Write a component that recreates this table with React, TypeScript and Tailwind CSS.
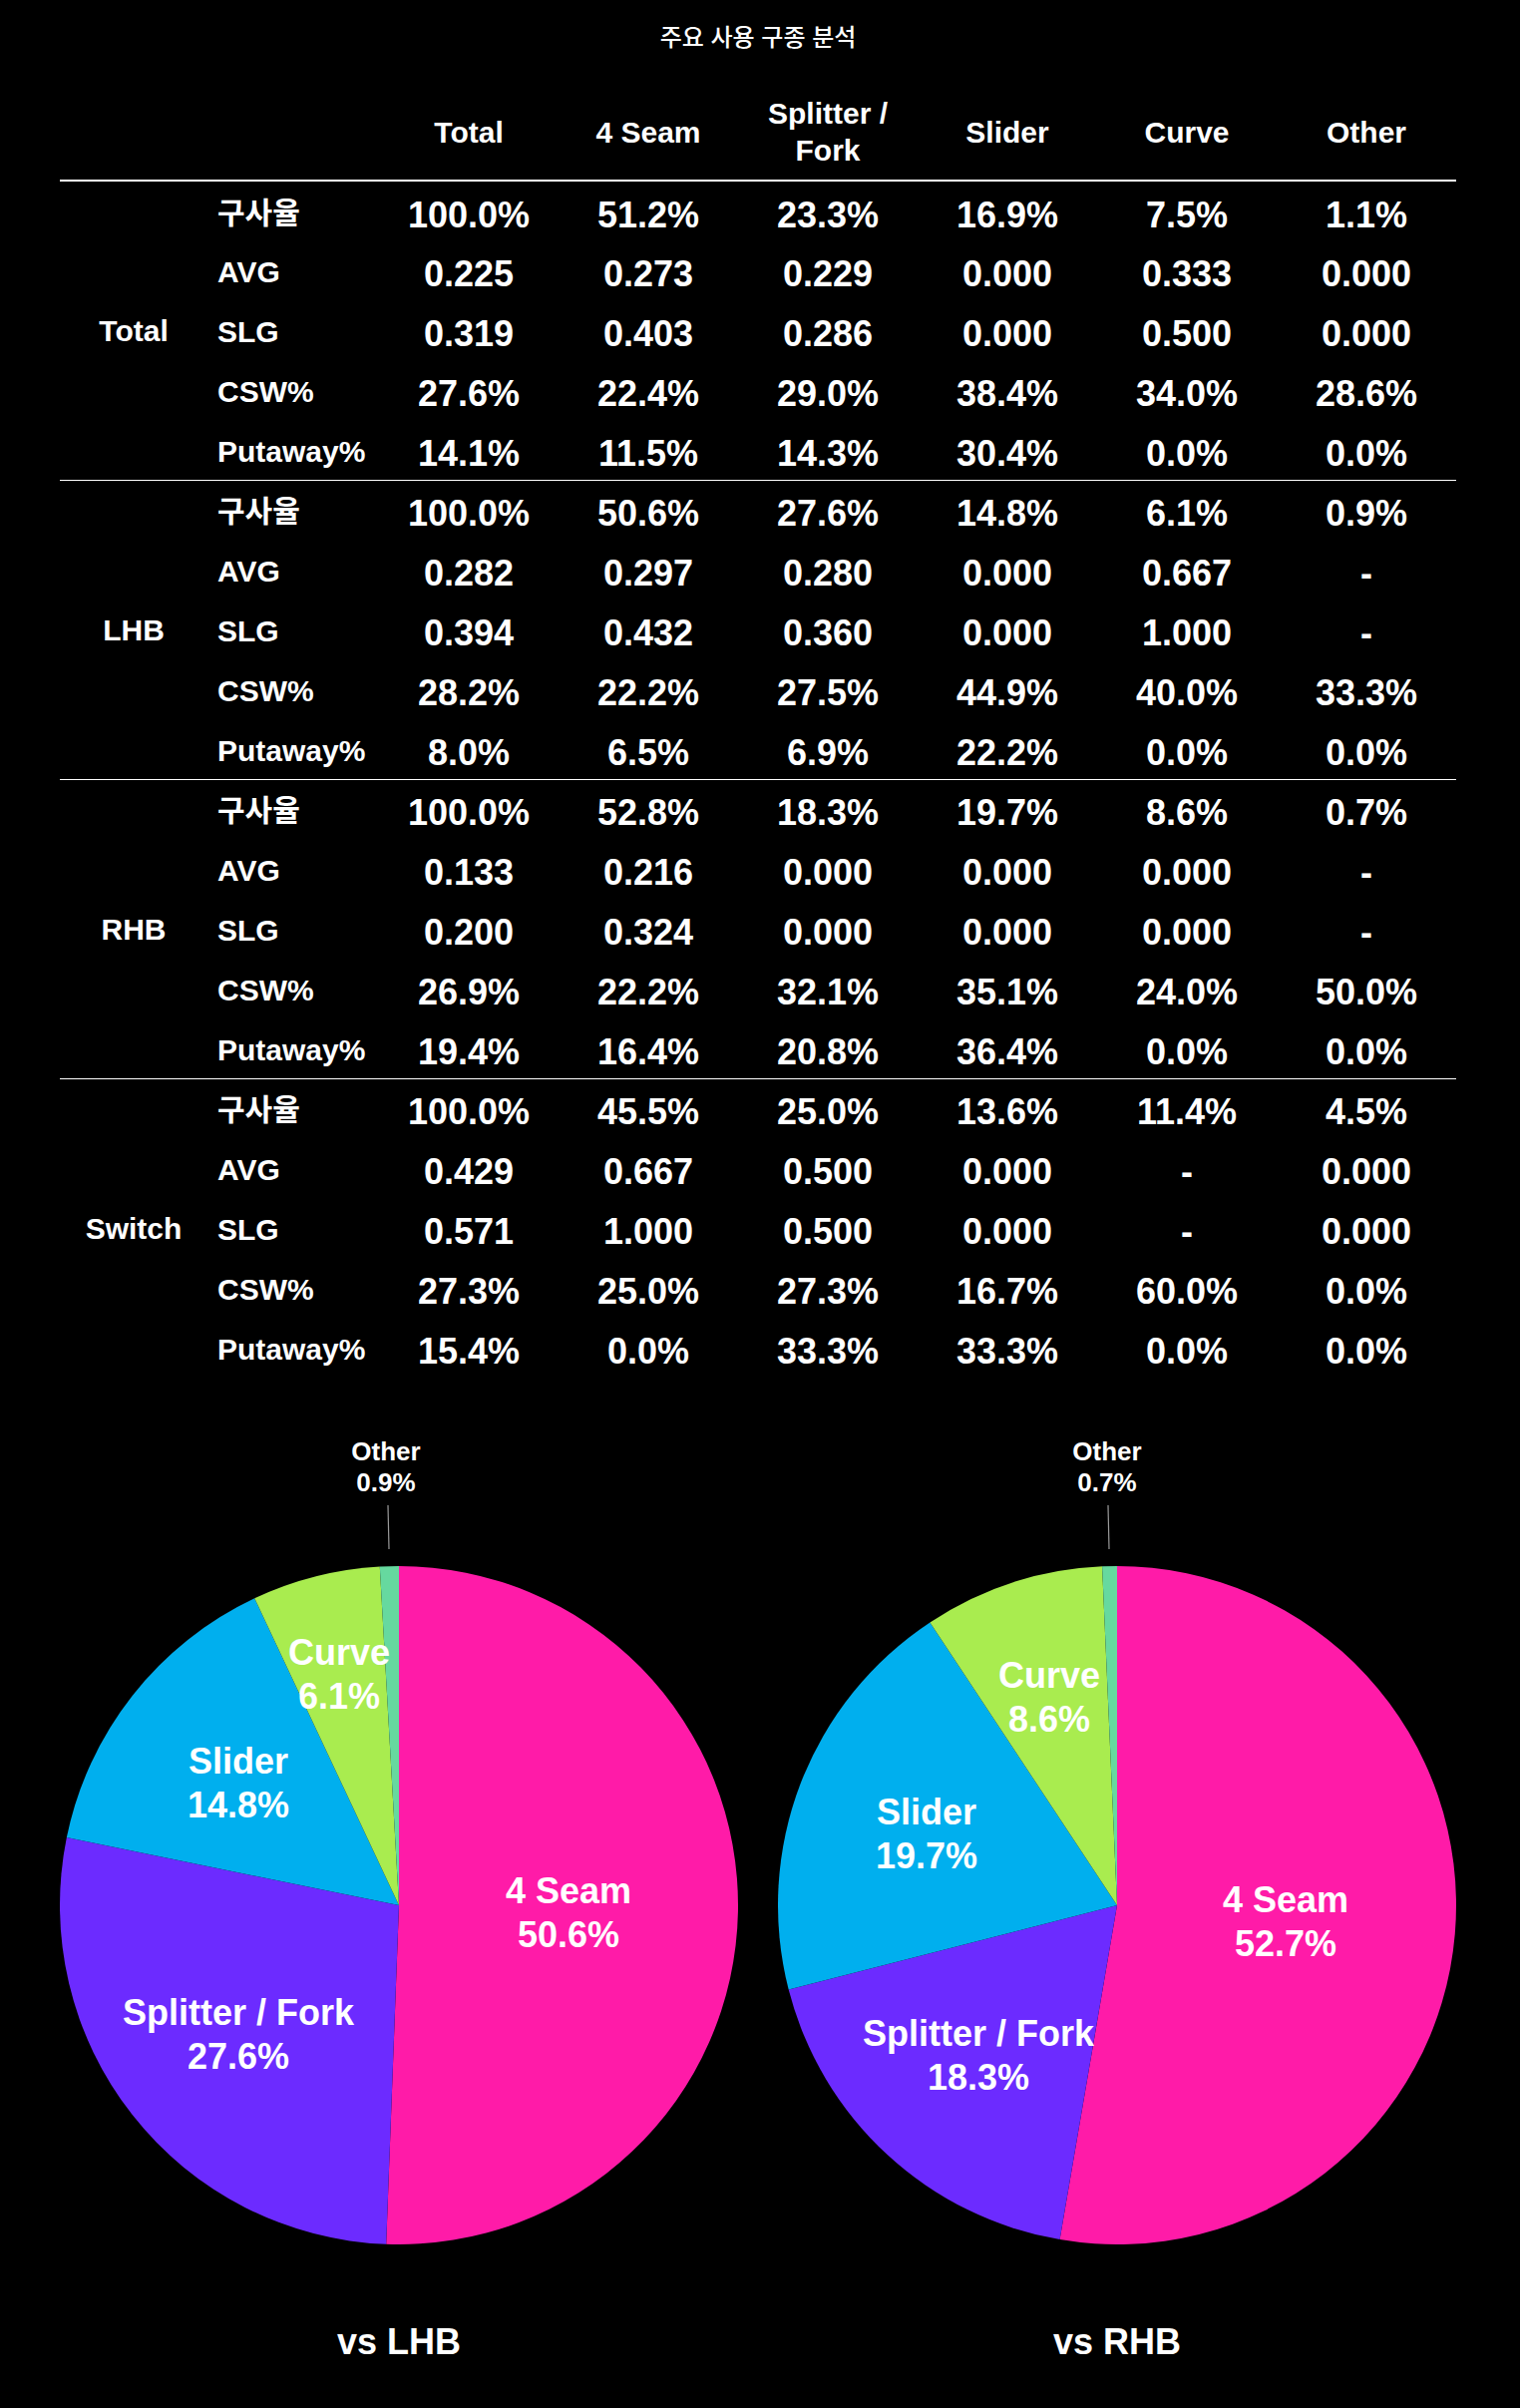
import React from 'react';

type Group = {
  name: string;
  rows: string[][];
};

const metrics = ['구사율', 'AVG', 'SLG', 'CSW%', 'Putaway%'];
const pitches = ['Total', '4 Seam', 'Splitter / Fork', 'Slider', 'Curve', 'Other'];

const groups: Group[] = [
  {
    name: 'Total',
    rows: [
      ['100.0%', '51.2%', '23.3%', '16.9%', '7.5%', '1.1%'],
      ['0.225', '0.273', '0.229', '0.000', '0.333', '0.000'],
      ['0.319', '0.403', '0.286', '0.000', '0.500', '0.000'],
      ['27.6%', '22.4%', '29.0%', '38.4%', '34.0%', '28.6%'],
      ['14.1%', '11.5%', '14.3%', '30.4%', '0.0%', '0.0%'],
    ],
  },
  {
    name: 'LHB',
    rows: [
      ['100.0%', '50.6%', '27.6%', '14.8%', '6.1%', '0.9%'],
      ['0.282', '0.297', '0.280', '0.000', '0.667', '-'],
      ['0.394', '0.432', '0.360', '0.000', '1.000', '-'],
      ['28.2%', '22.2%', '27.5%', '44.9%', '40.0%', '33.3%'],
      ['8.0%', '6.5%', '6.9%', '22.2%', '0.0%', '0.0%'],
    ],
  },
  {
    name: 'RHB',
    rows: [
      ['100.0%', '52.8%', '18.3%', '19.7%', '8.6%', '0.7%'],
      ['0.133', '0.216', '0.000', '0.000', '0.000', '-'],
      ['0.200', '0.324', '0.000', '0.000', '0.000', '-'],
      ['26.9%', '22.2%', '32.1%', '35.1%', '24.0%', '50.0%'],
      ['19.4%', '16.4%', '20.8%', '36.4%', '0.0%', '0.0%'],
    ],
  },
  {
    name: 'Switch',
    rows: [
      ['100.0%', '45.5%', '25.0%', '13.6%', '11.4%', '4.5%'],
      ['0.429', '0.667', '0.500', '0.000', '-', '0.000'],
      ['0.571', '1.000', '0.500', '0.000', '-', '0.000'],
      ['27.3%', '25.0%', '27.3%', '16.7%', '60.0%', '0.0%'],
      ['15.4%', '0.0%', '33.3%', '33.3%', '0.0%', '0.0%'],
    ],
  },
];

type Slice = {
  name: string;
  pct: number;
  color: string;
  // label position (x, first baseline) inside the svg
  lx?: number;
  ly?: number;
};

type Chart = {
  title: string;
  slices: Slice[];
  other: { x: number; line: [number, number, number, number] };
};

const PINK = '#ff1ba8';
const PURPLE = '#6c2bff';
const BLUE = '#00afee';
const GREEN = '#a9ec4f';
const TEAL = '#66d99f';

const charts: Chart[] = [
  {
    title: 'vs LHB',
    slices: [
      { name: '4 Seam', pct: 50.6, color: PINK, lx: 510, ly: 490 },
      { name: 'Splitter / Fork', pct: 27.6, color: PURPLE, lx: 179, ly: 612 },
      { name: 'Slider', pct: 14.8, color: BLUE, lx: 179, ly: 360 },
      { name: 'Curve', pct: 6.1, color: GREEN, lx: 280, ly: 251 },
      { name: 'Other', pct: 0.9, color: TEAL },
    ],
    other: { x: 327, line: [329, 91, 330, 135] },
  },
  {
    title: 'vs RHB',
    slices: [
      { name: '4 Seam', pct: 52.7, color: PINK, lx: 509, ly: 499 },
      { name: 'Splitter / Fork', pct: 18.3, color: PURPLE, lx: 201, ly: 633 },
      { name: 'Slider', pct: 19.7, color: BLUE, lx: 149, ly: 411 },
      { name: 'Curve', pct: 8.6, color: GREEN, lx: 272, ly: 274 },
      { name: 'Other', pct: 0.7, color: TEAL },
    ],
    other: { x: 330, line: [331, 91, 332, 135] },
  },
];

const CX = 340;
const CY = 492;
const R = 340;

const pt = (deg: number) => {
  const a = (deg * Math.PI) / 180;
  return [CX + R * Math.sin(a), CY - R * Math.cos(a)];
};

const slicePath = (a0: number, a1: number) => {
  const [x0, y0] = pt(a0);
  const [x1, y1] = pt(a1);
  const large = a1 - a0 > 180 ? 1 : 0;
  return `M ${CX} ${CY} L ${x0} ${y0} A ${R} ${R} 0 ${large} 1 ${x1} ${y1} Z`;
};

const FONT = "'Liberation Sans', 'Noto Sans CJK KR', Arial, sans-serif";

function Pie({ chart }: { chart: Chart }) {
  let acc = 0;
  const total = chart.slices.reduce((s, x) => s + x.pct, 0);
  const other = chart.slices[chart.slices.length - 1];
  return (
    <div className="flex flex-col items-center">
      <svg width={680} height={832} viewBox="0 0 680 832" style={{ fontFamily: FONT }}>
        {chart.slices.map((s) => {
          const a0 = (acc / total) * 360;
          acc += s.pct;
          const a1 = (acc / total) * 360;
          return <path key={s.name} d={slicePath(a0, a1)} fill={s.color} />;
        })}
        {chart.slices
          .filter((s) => s.lx !== undefined)
          .map((s) => (
            <text key={s.name} x={s.lx} y={s.ly} fill="white" fontSize={36} fontWeight={700} textAnchor="middle">
              <tspan x={s.lx}>{s.name}</tspan>
              <tspan x={s.lx} dy={44}>
                {s.pct.toFixed(1)}%
              </tspan>
            </text>
          ))}
        <text x={chart.other.x} y={46} fill="white" fontSize={26} fontWeight={700} textAnchor="middle">
          <tspan x={chart.other.x}>Other</tspan>
          <tspan x={chart.other.x} dy={31}>
            {other.pct.toFixed(1)}%
          </tspan>
        </text>
        <line
          x1={chart.other.line[0]}
          y1={chart.other.line[1]}
          x2={chart.other.line[2]}
          y2={chart.other.line[3]}
          stroke="#9a9a9a"
          strokeWidth={1.2}
        />
      </svg>
      <div className="mt-[76px] h-[44px] text-[36px] leading-[44px] font-bold text-white">{chart.title}</div>
    </div>
  );
}

export default function App() {
  return (
    <div
      className="min-h-[2414px] bg-black pl-[60px] pt-[20px] pb-[42px] text-white"
      style={{ fontFamily: FONT }}
    >
      <div className="w-[1400px]">
        <div className="h-[36px] text-center text-[24px] leading-[36px] font-medium">주요 사용 구종 분석</div>

        <table className="mt-[28px] w-[1400px] table-fixed border-collapse">
          <colgroup>
            <col className="w-[148px]" />
            <col className="w-[172px]" />
            {pitches.map((p) => (
              <col key={p} className="w-[180px]" />
            ))}
          </colgroup>
          <thead>
            <tr className="h-[97px] border-b-2 border-white">
              <th />
              <th />
              {pitches.map((p) => (
                <th key={p} className="px-2 text-center align-middle text-[30px] leading-[37px] font-bold">
                  {p}
                </th>
              ))}
            </tr>
          </thead>
          {groups.map((g, gi) => (
            <tbody key={g.name} className={gi < groups.length - 1 ? 'border-b border-white' : ''}>
              {g.rows.map((row, ri) => (
                <tr key={ri} className="h-[60px]">
                  {ri === 0 && (
                    <td rowSpan={5} className="text-center align-middle text-[30px] font-bold">
                      {g.name}
                    </td>
                  )}
                  <td className="pl-[10px] pt-[4px] align-middle text-[30px] leading-[36px] font-bold whitespace-nowrap">
                    {metrics[ri]}
                  </td>
                  {row.map((v, vi) => (
                    <td key={vi} className="pt-[8px] text-center align-middle text-[36px] leading-[40px] font-bold">
                      {v}
                    </td>
                  ))}
                </tr>
              ))}
            </tbody>
          ))}
        </table>

        <div className="mt-[37px] grid grid-cols-2 gap-[40px]">
          {charts.map((c) => (
            <Pie key={c.title} chart={c} />
          ))}
        </div>
      </div>
    </div>
  );
}
